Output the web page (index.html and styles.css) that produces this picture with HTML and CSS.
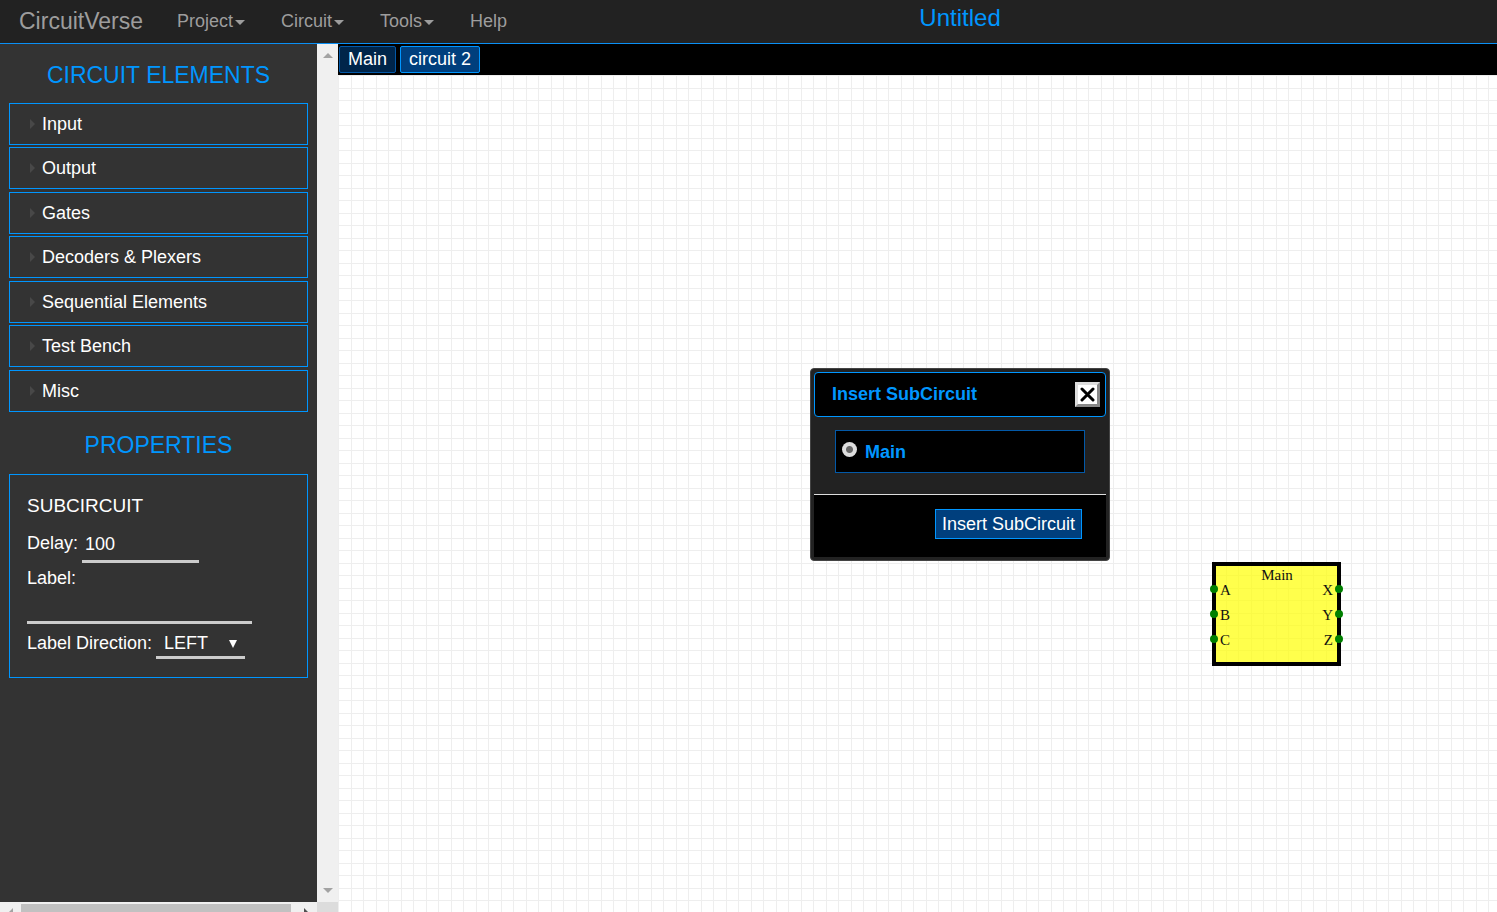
FILE: index.html
```html
<!DOCTYPE html>
<html lang="en">
<head>
<meta charset="utf-8">
<title>CircuitVerse</title>
<link rel="stylesheet" href="styles.css">
</head>
<body>
<header class="navbar">
  <a class="brand" href="#">CircuitVerse</a>
  <nav class="menu">
    <button type="button" class="menu-item">Project<span class="caret"></span></button>
    <button type="button" class="menu-item">Circuit<span class="caret"></span></button>
    <button type="button" class="menu-item">Tools<span class="caret"></span></button>
    <a class="menu-item" href="#">Help</a>
  </nav>
  <div class="project-name">Untitled</div>
</header>
<div class="workspace">
  <div class="side">
    <aside class="panel">
      <h2 class="panel-title">CIRCUIT ELEMENTS</h2>
      <div class="accordion">
        <button type="button" class="accordion-item">Input</button>
        <button type="button" class="accordion-item">Output</button>
        <button type="button" class="accordion-item">Gates</button>
        <button type="button" class="accordion-item">Decoders &amp; Plexers</button>
        <button type="button" class="accordion-item">Sequential Elements</button>
        <button type="button" class="accordion-item">Test Bench</button>
        <button type="button" class="accordion-item">Misc</button>
      </div>
      <h2 class="panel-title">PROPERTIES</h2>
      <form class="properties">
        <h3 class="properties-title">SUBCIRCUIT</h3>
        <div class="field">
          <label for="delay">Delay:</label>
          <input id="delay" class="input delay" type="text" value="100">
        </div>
        <div class="field stacked">
          <label for="label">Label:</label>
          <input id="label" class="input label-text" type="text">
        </div>
        <div class="field">
          <label for="direction">Label Direction:</label>
          <span class="select-wrap">
            <select id="direction" class="input direction">
              <option>LEFT</option>
              <option>RIGHT</option>
              <option>UP</option>
              <option>DOWN</option>
            </select>
            <svg class="select-arrow" width="8" height="8" viewBox="0 0 8 8"><path d="M0 0h8L4 8z" fill="#fff"/></svg>
          </span>
        </div>
      </form>
    </aside>
    <div class="scroll-y">
      <svg width="10" height="5" viewBox="0 0 10 5"><path d="M0 5 5 0l5 5z" fill="#a3a3a3"/></svg>
      <svg width="10" height="5" viewBox="0 0 10 5"><path d="M0 0h10L5 5z" fill="#a3a3a3"/></svg>
    </div>
    <div class="scroll-x">
      <svg width="4" height="4" viewBox="0 0 4 4"><path d="M4 0v4H0z" fill="#a3a3a3"/></svg>
      <div class="thumb"></div>
      <svg width="4" height="4" viewBox="0 0 4 4"><path d="M0 0v4h4z" fill="#505050"/></svg>
    </div>
    <div class="scroll-corner"></div>
  </div>
  <main class="editor">
    <div class="tabs">
      <button type="button" class="tab">Main</button>
      <button type="button" class="tab active">circuit 2</button>
    </div>
    <div class="canvas">
      <section class="dialog" role="dialog" aria-labelledby="dialog-title">
        <div class="dialog-header">
          <h4 id="dialog-title" class="dialog-title">Insert SubCircuit</h4>
          <button type="button" class="close" aria-label="Close">
            <svg width="15" height="15" viewBox="0 0 15 15"><path d="M2 2l11 11M13 2 2 13" stroke="#000" stroke-width="3" stroke-linecap="round"/></svg>
          </button>
        </div>
        <div class="dialog-body">
          <label class="option"><input class="radio" type="radio" name="circuit" checked>Main</label>
        </div>
        <div class="dialog-footer">
          <button type="button" class="insert">Insert SubCircuit</button>
        </div>
      </section>
      <svg class="subcircuit" width="133" height="104" viewBox="0 0 133 104">
        <rect x="4" y="2" width="125" height="100" fill="#ff0" fill-opacity=".7" stroke="#000" stroke-width="4"/>
        <g fill="green">
          <circle cx="4" cy="27" r="4"/><circle cx="4" cy="52" r="4"/><circle cx="4" cy="77" r="4"/>
          <circle cx="129" cy="27" r="4"/><circle cx="129" cy="52" r="4"/><circle cx="129" cy="77" r="4"/>
        </g>
        <g class="pin-text">
          <text x="67" y="18" text-anchor="middle">Main</text>
          <text x="10" y="33">A</text><text x="10" y="58">B</text><text x="10" y="83">C</text>
          <text x="123" y="33" text-anchor="end">X</text><text x="123" y="58" text-anchor="end">Y</text><text x="123" y="83" text-anchor="end">Z</text>
        </g>
      </svg>
    </div>
  </main>
</div>
</body>
</html>
```

FILE: styles.css
```css
* { box-sizing: border-box; }

body {
  margin: 0;
  height: 100vh;
  display: flex;
  flex-direction: column;
  overflow: hidden;
  font: 18px/24px "Liberation Sans", Arial, sans-serif;
  color: #fff;
}

button, input, select { font: inherit; color: inherit; }
h2, h3, h4 { margin: 0; font-weight: normal; }

.navbar {
  flex: none;
  height: 44px;
  display: flex;
  align-items: center;
  padding: 0 84px 2px 19px;
  background: #222;
  border-bottom: 1px solid #0b90f5;
  color: #9d9d9d;
}
.brand { font-size: 23px; color: inherit; text-decoration: none; }
.menu { display: flex; gap: 36px; margin-left: 34px; }
.menu-item {
  display: flex;
  align-items: center;
  gap: 2px;
  padding: 0;
  border: 0;
  background: none;
  color: inherit;
  text-decoration: none;
}
.caret {
  margin-top: 3px;
  border: 5px solid transparent;
  border-top-color: #9d9d9d;
  border-bottom: 0;
}
.project-name {
  flex: 1;
  padding-bottom: 6px;
  text-align: center;
  font-size: 24px;
  color: #0096ff;
}

.workspace { flex: 1; min-height: 0; display: flex; }

.side {
  flex: none;
  display: grid;
  grid-template-columns: 317px 21px;
  grid-template-rows: 1fr 10px;
}
.panel { background: #333; padding: 0 9px; overflow: hidden; }
.panel-title {
  padding: 18px 0 15px;
  text-align: center;
  font-size: 23px;
  line-height: 26px;
  color: #0096ff;
}
.accordion-item {
  display: flex;
  align-items: center;
  gap: 7px;
  width: 100%;
  height: 42px;
  margin-bottom: 2px;
  padding: 0 20px;
  border: 1px solid #0096ff;
  background: none;
  text-align: left;
}
.accordion-item:nth-child(even) { margin-bottom: 3px; }
.accordion-item::before {
  content: "";
  border: 5px solid transparent;
  border-left-color: #484848;
  border-right: 0;
}

.properties {
  margin-top: 1px;
  padding: 19px 17px 18px;
  border: 1px solid #0096ff;
}
.properties-title { margin-bottom: 11px; font-size: 19px; }
.field { display: flex; align-items: flex-start; gap: 4px; padding-top: 2px; }
.stacked { flex-direction: column; gap: 2px; padding: 3px 0 5px; }
.input {
  height: 32px;
  padding: 0 3px 2px;
  border: 0;
  border-bottom: 3px solid #ccc;
  border-radius: 0;
  background: transparent;
  outline: 0;
}
.delay { width: 117px; }
.label-text { width: 225px; }
.select-wrap { position: relative; display: flex; }
.direction {
  width: 89px;
  height: 28px;
  padding: 0 8px 2px;
  appearance: none;
}
.select-arrow { position: absolute; right: 8px; top: 9px; pointer-events: none; }

.scroll-y {
  display: flex;
  flex-direction: column;
  justify-content: space-between;
  align-items: center;
  padding: 9px 0;
  background: #f0f0f0;
}
.scroll-x {
  display: flex;
  align-items: flex-end;
  justify-content: space-between;
  padding: 2px 9px 0;
  background: #f0f0f0;
}
.thumb { flex: 1; align-self: stretch; margin: 0 13px 0 8px; background: #c1c1c1; }
.scroll-corner { background: #dcdcdc; }

.editor { flex: 1; min-width: 0; display: flex; flex-direction: column; }
.tabs {
  flex: none;
  display: flex;
  gap: 4px;
  height: 31px;
  padding: 2px 1px;
  background: #000;
}
.tab {
  padding: 0 8px 2px;
  border: 1px solid #0359a8;
  border-radius: 2px;
  background: #00254a;
}
.tab.active { border-color: #0096ff; background: #003f7d; }

.canvas {
  position: relative;
  flex: 1;
  background-color: #fff;
  background-image:
    linear-gradient(to right, #eee 1px, transparent 1px, transparent 13px, #eee 13px, #eee 14px, transparent 14px),
    linear-gradient(to bottom, #eee 1px, transparent 1px, transparent 13px, #eee 13px, #eee 14px, transparent 14px);
  background-size: 25px 25px;
}

.dialog {
  position: absolute;
  left: 472px;
  top: 293px;
  width: 300px;
  padding: 3px;
  border: 1px solid #444;
  border-radius: 4px;
  background: #222;
}
.dialog-header {
  display: flex;
  align-items: center;
  justify-content: space-between;
  height: 45px;
  padding: 0 5px 0 17px;
  border: 1px solid #0096ff;
  border-radius: 4px;
  background: #000;
}
.dialog-title { padding-bottom: 2px; font-size: 18px; font-weight: bold; color: #0096ff; }
.close {
  display: flex;
  align-items: center;
  justify-content: center;
  width: 25px;
  height: 25px;
  padding: 0;
  border: 3px solid;
  border-color: #ddd #888 #888 #ddd;
  background: #fff;
}
.dialog-body { padding: 13px 21px 21px; }
.option {
  display: flex;
  align-items: center;
  gap: 8px;
  height: 43px;
  padding: 0 6px;
  border: 1px solid #0359a8;
  background: #000;
  font-weight: bold;
  color: #0096ff;
}
.radio {
  width: 15px;
  height: 15px;
  margin: 0 0 4px;
  appearance: none;
  border-radius: 50%;
  background: radial-gradient(circle, #666 0 3px, #ddd 4px);
}
.dialog-footer {
  display: flex;
  justify-content: flex-end;
  padding: 14px 24px 18px;
  border-top: 1px solid #ddd;
  background: #000;
}
.insert {
  height: 30px;
  padding: 0 6px;
  border: 1px solid #0096ff;
  background: #003f7d;
}

.subcircuit { position: absolute; left: 872px; top: 487px; }
.pin-text { font: 15px "Liberation Serif", "Times New Roman", serif; fill: #111; }
```
